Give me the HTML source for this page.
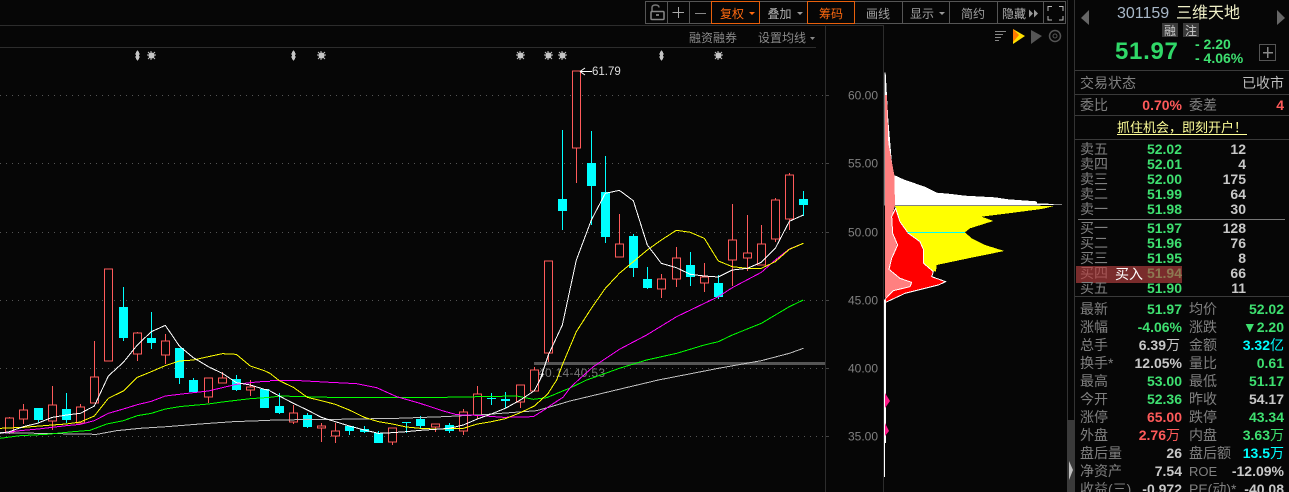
<!DOCTYPE html>
<html><head><meta charset="utf-8"><style>
html,body{margin:0;padding:0;background:#060606;width:1289px;height:492px;overflow:hidden}
svg{display:block}
text{font-family:"WenQuanYi Zen Hei","Liberation Sans","Noto Sans CJK SC",sans-serif;font-size:14px;fill:#808080}
.n{font-family:"Liberation Sans","WenQuanYi Zen Hei",sans-serif;font-weight:bold;font-size:14px}
.e{text-anchor:end}
.g{fill:#3ee070}.r{fill:#ff5a5a}.w{fill:#c8c8c8}.c{fill:#00ffff}
.t{font-size:12px;fill:#a0a0a0}
.a{font-family:"Liberation Sans",sans-serif;font-size:12px;fill:#808080}
.o{fill:#ff6a10;font-size:12px}
polyline{fill:none;shape-rendering:crispEdges}
</style></head><body>
<svg width="1289" height="492" viewBox="0 0 1289 492" xmlns="http://www.w3.org/2000/svg">
<defs>
<g id="s"><circle cx="0" cy="0" r="3" fill="#c4c4c4"/><path d="M-.5-4.500V4.500M-4.500-.5H4.500M-3.500-3.500L3.500 3.500M3.500-3.500L-3.500 3.500" stroke="#c4c4c4" fill="none"/></g>
<g id="u"><path d="M-1.500-4H1.500V4H-1.500Z M-.5-5H.5V5H-.5Z M-2.500-2H2.500V-1H-2.500Z M-2.500 1H2.500V2H-2.500Z" fill="#c4c4c4" shape-rendering="crispEdges"/></g>
</defs>
<rect width="1289" height="492" fill="#060606"/>

<!-- grid -->
<g stroke="#555" stroke-dasharray="1 5" shape-rendering="crispEdges">
<path d="M0 95.500H825M0 163.500H825M0 232.500H825M0 300.500H825M0 368.500H825M0 436.500H825"/>
</g>
<!-- frame -->
<g stroke="#2c2c2c" fill="none" shape-rendering="crispEdges">
<path d="M0 25.500H883.500M0 47.500H816M825.500 25V492M883.500 25V492"/>
<path d="M1067.500 0V492M1074.500 0V492" stroke="#333"/>
</g>
<rect x="1067" y="420" width="8" height="72" fill="#3a3a3a"/>
<path d="M1069 461L1073 470L1069 480Z" fill="#c0c0c0"/>

<!-- toolbar -->
<g stroke="#555" fill="none" shape-rendering="crispEdges">
<path d="M645.500 1.500H1065.500V23.500H645.500Z"/>
<path d="M667.500 1V23M689.500 1V23M902.500 1V23M949.500 1V23M997.500 1V23M1043.500 1V23"/>
</g>
<rect x="711.500" y="1.500" width="48" height="22" fill="#060606" stroke="#e8600c" shape-rendering="crispEdges"/>
<rect x="807.500" y="1.500" width="47" height="22" fill="#060606" stroke="#e8600c" shape-rendering="crispEdges"/>
<!-- lock -->
<path d="M652 11V7.500Q652 5 655.500 5T659 7.500" fill="none" stroke="#777" stroke-width="1.500"/>
<rect x="651" y="11.500" width="13" height="8" rx="1" fill="none" stroke="#888" stroke-width="1.500"/>
<path d="M656 14h3v2h-3z" fill="#777"/>
<path d="M672.500 12.500H684M678.500 7V18" stroke="#aaa" shape-rendering="crispEdges"/>
<path d="M695 13.500H706" stroke="#888" shape-rendering="crispEdges"/>
<text x="720" y="18" class="o">复权</text>
<path d="M749 12H755L752 15Z" fill="#ff6a10"/>
<text x="767.500" y="18" class="t" style="fill:#b0b0b0">叠加</text>
<path d="M797 12H803L800 15Z" fill="#999"/>
<text x="819" y="18" class="o">筹码</text>
<text x="866" y="18" class="t">画线</text>
<text x="910" y="18" class="t">显示</text>
<path d="M939 12H945L942 15Z" fill="#999"/>
<text x="961" y="18" class="t">简约</text>
<text x="1002" y="18" class="t" style="fill:#b0b0b0">隐藏</text>
<path d="M1029 9.500L1033 13.500L1029 17.500ZM1034 9.500L1038 13.500L1034 17.500Z" fill="#999"/>
<path d="M1048 11V6.500H1052M1059 6.500H1063V11M1048 16V20H1052M1059 20H1063V16" fill="none" stroke="#bbb" shape-rendering="crispEdges"/>
<text x="689" y="42" style="font-size:12px;fill:#8a8a8a">融资融券</text>
<text x="758" y="42" style="font-size:12px;fill:#8a8a8a">设置均线</text>
<path d="M810 37H815L812.500 40Z" fill="#888"/>
<!-- right toolbar icons -->
<path d="M995 31.500H1006M995 34.500H1003M995 37.500H1001M995 40.500H999" stroke="#888" shape-rendering="crispEdges"/>
<path d="M1013 29L1025 36L1013 44Z" fill="#ffe000"/>
<path d="M1013 29L1019 35L1013 42Z" fill="#ff7a00"/>
<path d="M1031 30L1042 36L1031 44Z" fill="#555"/>
<circle cx="1055" cy="36" r="5.500" fill="none" stroke="#555" stroke-width="1.500"/><circle cx="1055" cy="36" r="2" fill="none" stroke="#555"/>

<!-- markers -->
<use href="#u" x="137.500" y="55.500"/><use href="#s" x="151.500" y="55.500"/>
<use href="#u" x="293.500" y="55.500"/><use href="#s" x="321.500" y="55.500"/>
<use href="#s" x="520.500" y="55.500"/><use href="#s" x="548.500" y="55.500"/><use href="#s" x="562.500" y="55.500"/>
<use href="#u" x="661.500" y="55.500"/><use href="#s" x="718.500" y="55.500"/>

<!-- gray band -->
<rect x="534" y="362" width="291" height="3" fill="#555"/>
<text x="538" y="377" class="a" style="fill:#777;letter-spacing:.3px">40.14-40.53</text>

<!-- candles red wicks -->
<path shape-rendering="crispEdges" fill="none" stroke="#ff5a5a" d="M9.500 417V434M23.500 404V424M52.500 386V430M80.500 404V423M94.500 341V403M137.500 332V361M165.500 334V364M208.500 378V403M222.500 372V383M250.500 380V396M293.500 405V424M321.500 423V442M335.500 423V443M392.500 428V445M435.500 424V432M463.500 409V435M477.500 386V419M520.500 385V408M534.500 367V391M548.500 261V362M576.500 71V183M619.500 214V257M661.500 274V298M676.500 247V287M704.500 263V292M732.500 204V286M747.500 215V271M761.500 225V265M775.500 198V242M789.500 173V230"/>
<!-- red bodies -->
<path shape-rendering="crispEdges" fill="#060606" stroke="#ff5a5a" d="M5.500 418h8v14h-8zM19.500 410h8v9h-8zM48.500 405h8v16h-8zM76.500 407h8v16h-8zM90.500 377h8v26h-8zM104.500 269h8v92h-8zM133.500 333h8v21h-8zM161.500 341h8v14h-8zM204.500 378h8v19h-8zM218.500 378h8v5h-8zM246.500 387h8v3h-8zM289.500 413h8v9h-8zM317.500 426h8v2h-8zM331.500 431h8v5h-8zM388.500 428h8v14h-8zM431.500 424h8v3h-8zM459.500 412h8v19h-8zM473.500 394h8v21h-8zM516.500 385h8v17h-8zM530.500 370h8v21h-8zM544.500 261h8v92h-8zM572.500 71h8v77h-8zM615.500 244h8v13h-8zM657.500 279h8v10h-8zM672.500 258h8v21h-8zM700.500 277h8v6h-8zM728.500 240h8v20h-8zM743.500 253h8v5h-8zM757.500 244h8v21h-8zM771.500 200h8v39h-8zM785.500 175h8v44h-8z"/>
<!-- cyan wicks -->
<path shape-rendering="crispEdges" fill="none" stroke="#00ffff" d="M38.500 408V422M66.500 393V423M123.500 287V341M151.500 312V349M179.500 348V384M193.500 378V392M236.500 375V391M264.500 389V408M279.500 393V414M307.500 413V428M349.500 426V435M364.500 426V433M378.500 431V443M406.500 422V433M420.500 416V428M449.500 423V433M491.500 393V405M505.500 392V408M562.500 130V230M591.500 131V225M605.500 156V243M633.500 234V277M647.500 267V289M690.500 252V286M718.500 275V299M803.500 191V216"/>
<!-- cyan bodies -->
<path shape-rendering="crispEdges" fill="#00ffff" d="M34 408h9v12h-9zM62 409h9v11h-9zM119 307h9v31h-9zM147 338h9v5h-9zM175 348h9v30h-9zM189 380h9v12h-9zM232 379h9v11h-9zM260 389h9v19h-9zM275 406h9v7h-9zM303 415h9v12h-9zM345 426h9v5h-9zM360 429h9v3h-9zM374 433h9v10h-9zM402 422h9v1h-9zM416 419h9v7h-9zM445 425h9v6h-9zM487 398h9v1h-9zM501 399h9v2h-9zM558 199h9v12h-9zM587 163h9v23h-9zM601 192h9v45h-9zM629 236h9v32h-9zM643 279h9v9h-9zM686 265h9v12h-9zM714 283h9v14h-9zM799 199h9v6h-9z"/>

<!-- MA lines -->
<g transform="translate(0,260) scale(.33333)" stroke-width="3">
<polyline stroke="#c0c0c0" points="0,518 290,523 350,512 420,505 500,500 600,492 700,485 810,481"/>
<polyline stroke="#00ff00" points="0,535 60,527 140,523 220,515 270,511 320,492 370,482 412,467 454,460 496,447 538,440 580,436 625,432 667,426 709,421 751,416 810,412"/>
<polyline stroke="#ff00ff" points="0,520 60,512 115,507 157,502 199,497 241,493 283,482 325,460 370,447 412,434 454,424 496,408 538,403 580,398 625,393 667,383 709,373 751,368 793,364 810,364"/>
<polyline stroke="#ffff00" points="0,505 70,502 157,495 199,492 241,486 283,468 325,415 370,393 412,352 454,335 496,317 538,303 580,300 625,290 667,281 709,283 751,318 793,332 810,340"/>
<polyline stroke="#ffffff" points="0,520 28,515 70,500 112,490 157,472 199,465 241,460 283,438 325,348 370,307 412,255 454,215 496,196 538,258 580,293 625,320 667,340 709,368 751,375 793,388 810,391"/>
</g>
<g transform="translate(270,340) scale(.33333)" stroke-width="3">
<polyline stroke="#c0c0c0" points="0,240 200,238 380,235 520,230 640,224 720,218 800,212 860,195"/>
<polyline stroke="#00ff00" points="0,172 30,168 180,172 380,172 520,172 740,168 790,178 830,173"/>
<polyline stroke="#ff00ff" points="0,122 90,122 180,127 260,131 320,143 380,170 450,190 520,213 560,224 620,226 700,232 790,230 830,205"/>
<polyline stroke="#ffff00" points="0,100 28,122 70,142 112,172 154,182 196,193 238,210 283,232 325,245 367,252 409,261 451,265 496,267 538,266 580,265 622,252 664,245 706,236 751,218 793,198 835,160"/>
<polyline stroke="#ffffff" points="0,153 28,168 70,190 112,210 154,232 196,245 238,258 283,270 325,280 367,278 409,275 451,271 496,268 538,265 580,255 622,237 664,222 706,205 751,180 793,152 820,100"/>
</g>
<g transform="translate(530,60) scale(.33333)" stroke-width="3">
<polyline stroke="#c0c0c0" points="80,1035 120,1023 385,960 565,925 694,902 778,880 820,865"/>
<polyline stroke="#00ff00" points="50,1013 120,984 170,960 268,925 350,900 440,880 523,855 565,845 607,825 694,790 736,765 778,740 820,720"/>
<polyline stroke="#ff00ff" points="50,1044 100,1011 120,984 145,960 190,920 268,868 350,825 440,770 523,730 565,710 607,683 694,637 736,600 778,567 820,550"/>
<polyline stroke="#ffff00" points="55,999 80,960 97,915 139,815 184,745 226,685 268,640 310,605 352,570 394,540 439,511 481,517 523,535 565,603 607,620 652,625 694,625 736,605 778,568 820,550"/>
<polyline stroke="#ffffff" points="30,960 55,885 97,795 139,600 184,480 226,400 268,391 310,422 352,555 394,610 439,623 481,643 523,648 565,651 607,630 652,625 694,607 736,565 778,484 820,465"/>
</g>
<!-- high label -->
<path d="M580 71.500H592M580 71.500L585 68M580 71.500L585 75" stroke="#fff" fill="none"/>
<text x="592" y="75" class="a" style="fill:#ddd;font-size:11.500px">61.79</text>

<!-- axis labels -->
<text x="848" y="99.500" class="a">60.00</text>
<text x="848" y="167.500" class="a">55.00</text>
<text x="848" y="236.500" class="a">50.00</text>
<text x="848" y="304.500" class="a">45.00</text>
<text x="848" y="372.500" class="a">40.00</text>
<text x="848" y="440.500" class="a">35.00</text>
<path d="M826 95.500H829M826 163.500H829M826 232.500H829M826 300.500H829M826 368.500H829M826 436.500H829" stroke="#444" shape-rendering="crispEdges"/>

<!-- chip profile -->
<g transform="translate(825,60) scale(.33333)" shape-rendering="crispEdges">
<path fill="#fff" d="M178 38H182L190 180L200 300L207 345L240 360L300 380L335 398L380 402L420 407L510 412L550 418L635 424L636 430L718 433L640 436L208 437L178 437Z"/>
<path fill="#ff8080" d="M180 105H186L190 250L208 345L210 437L200 470L202 520L218 560L200 595L192 628L225 655L260 665L255 680L205 695L180 715Z"/>
<path fill="#ffff00" d="M210 438H688L650 447L550 460L470 470L505 483L435 505L420 517L440 535L480 555L538 573L430 595L335 615L333 635L322 632L296 610L296 570L285 545L250 518L225 485Z"/>
<path fill="#ff0000" stroke="#fff" stroke-width="3" d="M212 445L200 470L203 520L218 555L200 595L192 628L225 655L260 667L255 680L205 692L180 718L180 728L240 700L340 675L362 665L320 650L325 635L296 610L296 570L285 545L250 520L225 485Z"/>
<path d="M248 517.500H420" stroke="#00ffff" stroke-width="3"/>
</g>
<rect x="884" y="300" width="2" height="143" fill="#fff" shape-rendering="crispEdges"/>
<rect x="884" y="443" width="1" height="34" fill="#fff" shape-rendering="crispEdges"/>
<path d="M885 393L890 401L885 408Z" fill="#ff1a8a"/>
<path d="M885 423L889 431L885 436Z" fill="#ff1a8a"/>

<!-- right panel -->
<path d="M1081 18L1089 10V25ZM1285 18L1277 10V25Z" fill="#666"/>
<text x="1117" y="18" style="font-family:'Liberation Sans',sans-serif;font-size:16px;fill:#a8b8c8">301159</text>
<text x="1176" y="18" style="font-size:16px;fill:#f0f0c8">三维天地</text>
<rect x="1162" y="23" width="16" height="14" fill="#3a3a3a"/><rect x="1183" y="23" width="16" height="14" fill="#3a3a3a"/>
<text x="1164" y="35" style="font-size:12px;fill:#ccc">融</text><text x="1185" y="35" style="font-size:12px;fill:#ccc">注</text>
<text x="1115" y="59" class="n" style="font-size:24px;letter-spacing:.7px;fill:#30d868">51.97</text>
<text x="1195" y="49" class="n g">- 2.20</text>
<text x="1195" y="63" class="n g">- 4.06%</text>
<rect x="1259.500" y="44.500" width="16" height="16" fill="none" stroke="#555" shape-rendering="crispEdges"/>
<path d="M1263 52.500H1273M1267.500 47V58" stroke="#888" stroke-width="1.500" shape-rendering="crispEdges"/>

<path d="M1075 70.500H1289M1075 94.500H1289M1075 115.500H1289M1075 139.500H1289M1075 296.500H1289" stroke="#3a3a3a" shape-rendering="crispEdges"/>
<path d="M1078 219.500H1285" stroke="#777" shape-rendering="crispEdges"/>

<text x="1080" y="88">交易状态</text><text x="1284" y="88" class="e" style="fill:#bdbdbd">已收市</text>
<text x="1080" y="110">委比</text><text x="1182" y="110" class="n e r">0.70%</text><text x="1189" y="110">委差</text><text x="1284" y="110" class="n e r">4</text>
<text x="1117" y="132" style="font-size:13px;fill:#ffff99">抓住机会，即刻开户！</text>
<path d="M1117 134.500H1247" stroke="#ffff99" shape-rendering="crispEdges"/>

<text x="1080" y="154">卖五</text><text x="1182" y="154" class="n e g">52.02</text><text x="1246" y="154" class="n e w">12</text>
<text x="1080" y="169">卖四</text><text x="1182" y="169" class="n e g">52.01</text><text x="1246" y="169" class="n e w">4</text>
<text x="1080" y="184">卖三</text><text x="1182" y="184" class="n e g">52.00</text><text x="1246" y="184" class="n e w">175</text>
<text x="1080" y="199">卖二</text><text x="1182" y="199" class="n e g">51.99</text><text x="1246" y="199" class="n e w">64</text>
<text x="1080" y="214">卖一</text><text x="1182" y="214" class="n e g">51.98</text><text x="1246" y="214" class="n e w">30</text>
<text x="1080" y="233">买一</text><text x="1182" y="233" class="n e g">51.97</text><text x="1246" y="233" class="n e w">128</text>
<text x="1080" y="248">买二</text><text x="1182" y="248" class="n e g">51.96</text><text x="1246" y="248" class="n e w">76</text>
<text x="1080" y="263">买三</text><text x="1182" y="263" class="n e g">51.95</text><text x="1246" y="263" class="n e w">8</text>
<text x="1080" y="278">买四</text><text x="1182" y="278" class="n e g">51.94</text><text x="1246" y="278" class="n e w">66</text>
<rect x="1076" y="266" width="106" height="17" fill="#b84040" fill-opacity=".65"/>
<text x="1115" y="279" style="fill:#fff">买入</text>
<text x="1080" y="293">买五</text><text x="1182" y="293" class="n e g">51.90</text><text x="1246" y="293" class="n e w">11</text>

<text x="1080" y="314">最新</text><text x="1182" y="314" class="n e g">51.97</text><text x="1189" y="314">均价</text><text x="1284" y="314" class="n e g">52.02</text>
<text x="1080" y="332">涨幅</text><text x="1182" y="332" class="n e g">-4.06%</text><text x="1189" y="332">涨跌</text><text x="1284" y="332" class="n e g">▼2.20</text>
<text x="1080" y="350">总手</text><text x="1180" y="350" class="n e w">6.39<tspan style="font-weight:normal;font-family:'WenQuanYi Zen Hei'">万</tspan></text><text x="1189" y="350">金额</text><text x="1284" y="350" class="n e c">3.32<tspan style="font-weight:normal;font-family:'WenQuanYi Zen Hei'">亿</tspan></text>
<text x="1080" y="368">换手*</text><text x="1182" y="368" class="n e w">12.05%</text><text x="1189" y="368">量比</text><text x="1284" y="368" class="n e g">0.61</text>
<text x="1080" y="386">最高</text><text x="1182" y="386" class="n e g">53.00</text><text x="1189" y="386">最低</text><text x="1284" y="386" class="n e g">51.17</text>
<text x="1080" y="404">今开</text><text x="1182" y="404" class="n e g">52.36</text><text x="1189" y="404">昨收</text><text x="1284" y="404" class="n e w">54.17</text>
<text x="1080" y="422">涨停</text><text x="1182" y="422" class="n e r">65.00</text><text x="1189" y="422">跌停</text><text x="1284" y="422" class="n e g">43.34</text>
<text x="1080" y="440">外盘</text><text x="1180" y="440" class="n e r">2.76<tspan style="font-weight:normal;font-family:'WenQuanYi Zen Hei'">万</tspan></text><text x="1189" y="440">内盘</text><text x="1284" y="440" class="n e g">3.63<tspan style="font-weight:normal;font-family:'WenQuanYi Zen Hei'">万</tspan></text>
<text x="1080" y="458">盘后量</text><text x="1182" y="458" class="n e w">26</text><text x="1189" y="458">盘后额</text><text x="1284" y="458" class="n e c">13.5<tspan style="font-weight:normal;font-family:'WenQuanYi Zen Hei'">万</tspan></text>
<text x="1080" y="476">净资产</text><text x="1182" y="476" class="n e w">7.54</text><text x="1189" y="476" style="font-family:'Liberation Sans',sans-serif;font-size:13px">ROE</text><text x="1284" y="476" class="n e w">-12.09%</text>
<text x="1080" y="494">收益(三)</text><text x="1182" y="494" class="n e w">-0.972</text><text x="1189" y="494">PE(动)*</text><text x="1284" y="494" class="n e w">-40.08</text>
</svg>
</body></html>
